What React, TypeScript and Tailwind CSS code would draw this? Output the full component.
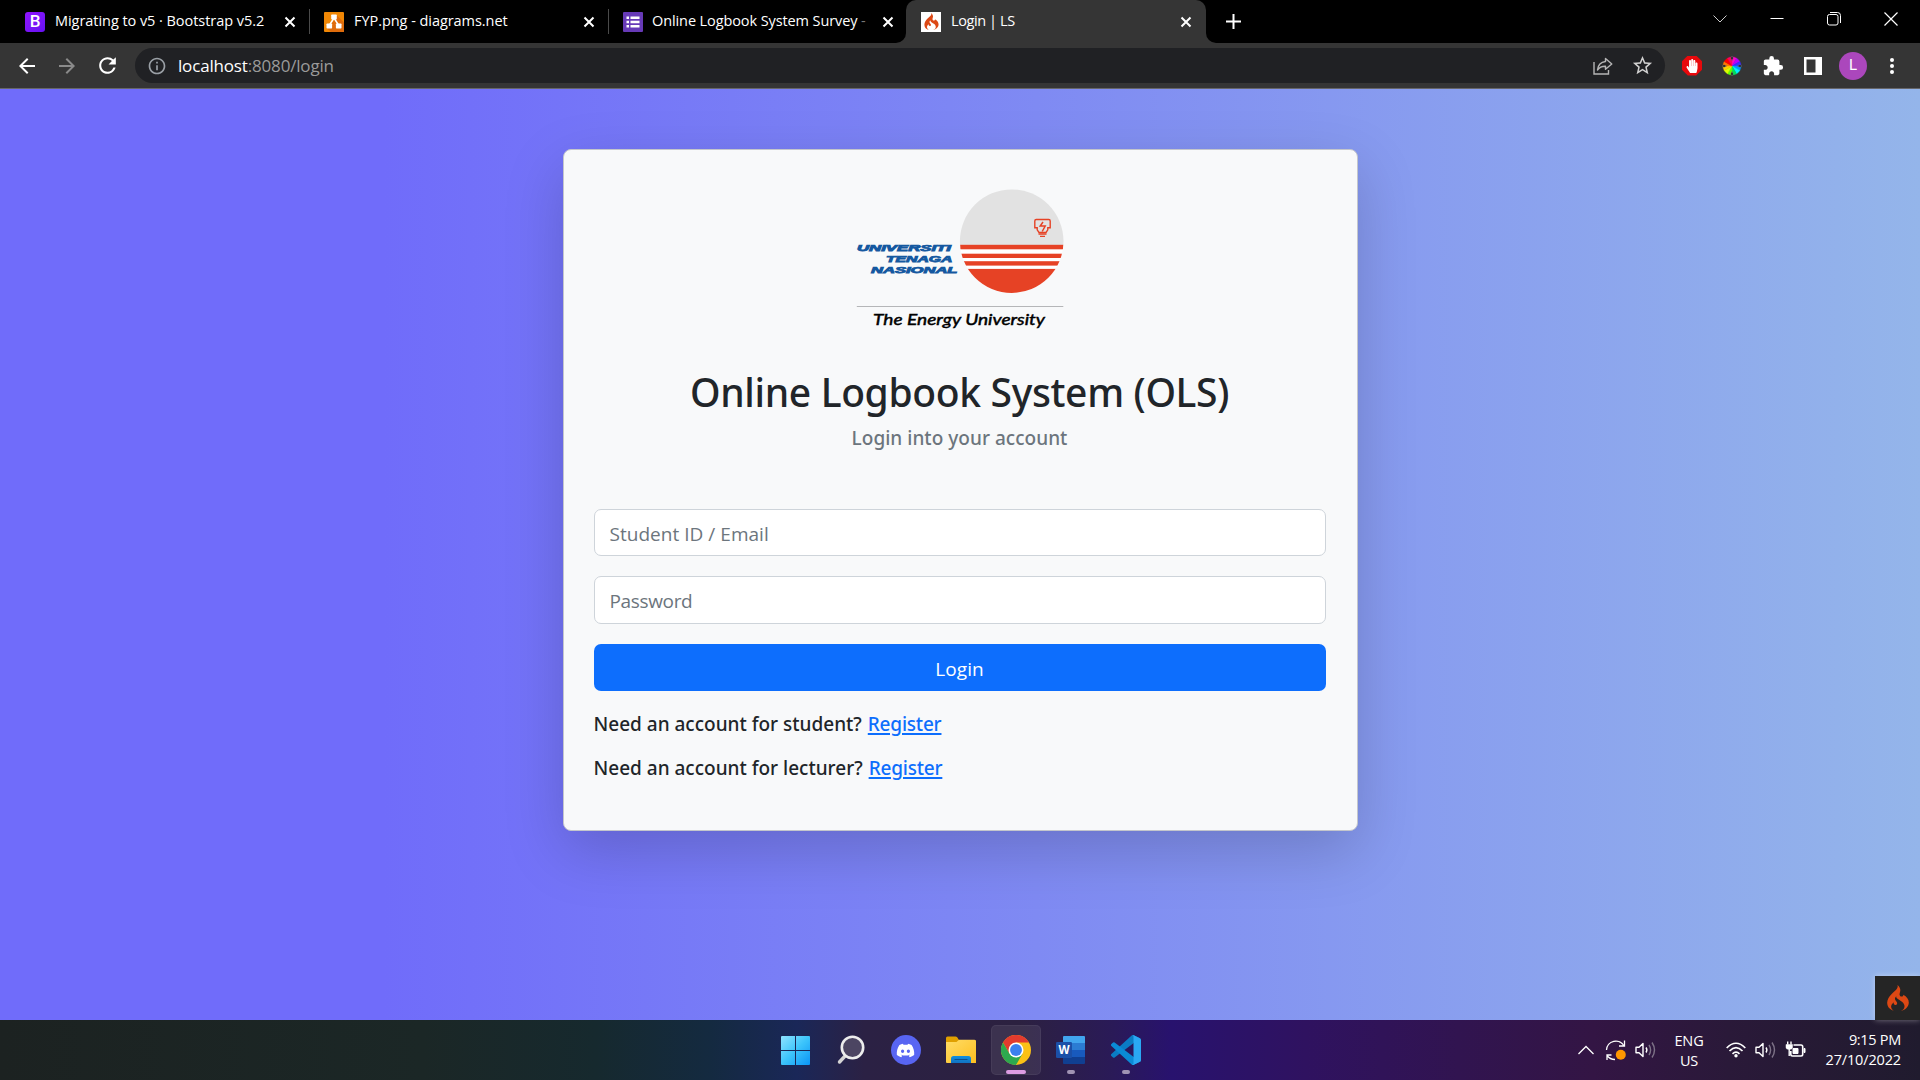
import React from "react";
import { SiCodeigniter } from "react-icons/si";
import { FaDiscord, FaHandPaper } from "react-icons/fa";
import { MdExtension, MdRefresh, MdStarBorder, MdArrowBack, MdArrowForward, MdInfoOutline } from "react-icons/md";

function CloseX() {
  return (
    <svg width="12" height="12" viewBox="0 0 12 12" fill="none" stroke="#fff" strokeWidth="2">
      <path d="M1.5 1.5l9 9M10.5 1.5l-9 9" />
    </svg>
  );
}

function BootstrapIcon() {
  return (
    <div className="flex h-5 w-5 items-center justify-center rounded-[3px] bg-linear-to-br from-[#9013fe] to-[#6610f2] font-['Roboto'] text-[17px] leading-none font-medium text-white">
      B
    </div>
  );
}

function DiagramIcon() {
  return (
    <svg width="20" height="20" viewBox="0 0 20 20">
      <rect width="20" height="20" rx="1" fill="#f08705" />
      <path d="M12.5 3L20 10.500V20H7L3 16.500l7-8z" fill="#df6c0c" />
      <path d="M10 6L5.500 13M10 6l4.500 7" stroke="#fff" strokeWidth="1.500" />
      <rect x="7.200" y="2.500" width="5.600" height="5" rx=".7" fill="#fff" />
      <rect x="2.500" y="11.500" width="5.600" height="5" rx=".7" fill="#fff" />
      <rect x="11.900" y="11.500" width="5.600" height="5" rx=".7" fill="#fff" />
    </svg>
  );
}

function FormsIcon() {
  return (
    <svg width="20" height="20" viewBox="0 0 20 20">
      <rect width="20" height="20" rx="1" fill="#673ab7" />
      <path d="M3.500 4.500h2.500v2.500H3.500zM3.500 8.700h2.500v2.500H3.500zM3.500 12.900h2.500v2.500H3.500zM7.500 4.500h9v2.500h-9zM7.500 8.700h9v2.500h-9zM7.500 12.900h9v2.500h-9z" fill="#fff" />
    </svg>
  );
}

function TabBar() {
  return (
    <div className="flex h-[43px] items-center bg-black text-[14.5px] text-white">
      <div className="flex h-full w-[309px] shrink-0 items-center pr-[13px] pl-[25px]">
        <BootstrapIcon />
        <span className="ml-[10px] grow pb-px tracking-[-0.05px] whitespace-nowrap">Migrating to v5 · Bootstrap v5.2</span>
        <CloseX />
      </div>
      <div className="h-[25px] w-px shrink-0 bg-[#4a4a4a]" />
      <div className="flex h-full w-[298px] shrink-0 items-center pr-[13px] pl-[14px]">
        <DiagramIcon />
        <span className="ml-[10px] grow pb-px tracking-[-0.05px] whitespace-nowrap">FYP.png - diagrams.net</span>
        <CloseX />
      </div>
      <div className="h-[25px] w-px shrink-0 bg-[#4a4a4a]" />
      <div className="flex h-full w-[287px] shrink-0 items-center pr-[2px] pl-[14px]">
        <FormsIcon />
        <span className="ml-[9px] grow pb-px tracking-[-0.1px] whitespace-nowrap">
          Online Logbook System Survey <span className="text-[#777]">-</span>
        </span>
        <CloseX />
      </div>
      <div className="flex h-full w-[10px] shrink-0 items-end bg-[#353535]">
        <div className="h-full w-[10px] rounded-br-[10px] bg-black" />
      </div>
      <div className="h-full w-[300px] shrink-0 bg-black">
        <div className="flex h-full items-center rounded-t-[10px] bg-[#353535] pr-[14px] pl-[15px]">
          <div className="flex h-5 w-5 items-center justify-center bg-white">
            <SiCodeigniter size={17} color="#dd4814" />
          </div>
          <span className="ml-[10px] grow pb-px tracking-[-0.4px] whitespace-nowrap">Login | LS</span>
          <CloseX />
        </div>
      </div>
      <div className="flex h-full w-[10px] shrink-0 bg-[#353535]">
        <div className="h-full w-[10px] rounded-bl-[10px] bg-black" />
      </div>
      <svg className="ml-[10px]" width="15" height="15" viewBox="0 0 15 15" stroke="#fff" strokeWidth="2">
        <path d="M7.500 0v15M0 7.500h15" />
      </svg>
      <div className="ml-auto flex h-full items-start gap-[43px] pt-[12px] pr-[22px]">
        <svg width="14" height="14" viewBox="0 0 14 14" fill="none" stroke="#ccc"><path d="M.5 3.500l6.500 6.500 6.500-6.500" /></svg>
        <svg width="14" height="14" viewBox="0 0 14 14" stroke="#fff"><path d="M.5 6.500h13" /></svg>
        <svg width="14" height="14" viewBox="0 0 14 14" fill="none" stroke="#fff">
          <rect x=".5" y="2.500" width="10.500" height="10.500" rx="2" />
          <path d="M3 .5h7.500a3 3 0 0 1 3 3V11" />
        </svg>
        <svg width="14" height="14" viewBox="0 0 14 14" stroke="#fff" strokeWidth="1.200"><path d="M.5.5l13 13M13.500.5l-13 13" /></svg>
      </div>
    </div>
  );
}

function ColorWheel() {
  const slices = ["#ff00c8", "#b400ff", "#3a2cff", "#0096ff", "#00f0ff", "#00e05a", "#5cff00", "#d8ff00", "#ffd000", "#ff7800", "#ff0000", "#ff0060"];
  return (
    <svg width="20" height="20" viewBox="-10 -10 20 20">
      {slices.map((c, i) => (
        <path key={c} d="M0 0L0-9A9 9 0 0 1 4.500-7.790Z" fill={c} stroke={c} strokeWidth=".4" transform={`rotate(${i * 30})`} />
      ))}
      {[0, 90, 180, 270].map((a) => (
        <path key={a} d="M0-5.500L-1.200-8 0-10 1.200-8Z" fill="#111" stroke="#777" strokeWidth=".5" transform={`rotate(${a})`} />
      ))}
    </svg>
  );
}

function Toolbar() {
  return (
    <div className="flex h-[46px] items-center border-b border-[#66666a] bg-[#353535] pr-[18px] pl-[15px]">
      <MdArrowBack size={24} color="#fff" />
      <MdArrowForward className="ml-[16px]" size={24} color="#8a8a8a" />
      <MdRefresh className="ml-[16px]" size={25} color="#fff" />
      <div className="ml-[15px] flex h-[35px] w-[1530px] items-center rounded-full bg-[#202124] pr-[11px] pl-[12px]">
        <MdInfoOutline size={20} color="#9aa0a6" />
        <span className="ml-[11px] text-[17px] tracking-[-0.17px] text-white">
          localhost<span className="text-[#9a9a9a]">:8080/login</span>
        </span>
        <svg className="ml-auto" width="20" height="18" viewBox="0 0 20 18" fill="none" stroke="#b5b5b5" strokeWidth="1.400">
          <path d="M1 5v12h14.500v-4" />
          <path d="M12.500 1.500L18.800 7l-6.300 5.300V9.300C9 9.200 6.500 10.200 4.500 13c.5-4.500 3.300-8 8-8.500z" strokeLinejoin="round" />
        </svg>
        <MdStarBorder className="ml-[18px]" size={23} color="#d0d0d0" />
      </div>
      <div className="ml-[17px] flex items-center">
        <div className="flex h-5 w-5 items-center justify-center bg-[#e8090c] [clip-path:polygon(29%_0,71%_0,100%_29%,100%_71%,71%_100%,29%_100%,0_71%,0_29%)]">
          <FaHandPaper className="scale-x-90" size={14} color="#fff" />
        </div>
        <div className="ml-[20px]"><ColorWheel /></div>
        <MdExtension className="ml-[20px]" size={22} color="#fff" />
        <svg className="ml-[20px]" width="18" height="18" viewBox="0 0 18 18">
          <path fillRule="evenodd" d="M0 0h18v18H0zM2.500 2.500v13h9v-13z" fill="#fff" />
        </svg>
        <div className="ml-[17px] flex h-[28px] w-[28px] items-center justify-center rounded-full bg-[#ab47bc] font-['Roboto'] text-[15px] text-white">L</div>
        <svg className="ml-[23px]" width="4" height="18" viewBox="0 0 4 18" fill="#fff">
          <circle cx="2" cy="3" r="2" /><circle cx="2" cy="9" r="2" /><circle cx="2" cy="15" r="2" />
        </svg>
      </div>
    </div>
  );
}

function UniversityLogo() {
  return (
    <svg className="mx-auto mt-[39px] block" width="208" height="141" viewBox="856 189 208 141">
      <defs>
        <clipPath id="sun"><circle cx="1011.700" cy="241.200" r="51.800" /></clipPath>
      </defs>
      <g clipPath="url(#sun)">
        <rect x="959" y="189" width="106" height="56" fill="#e2e2e2" />
        <rect x="959" y="245" width="106" height="50" fill="#fff" />
        <g fill="#e64225">
          <rect x="959" y="244.800" width="106" height="4.500" />
          <rect x="959" y="253.700" width="106" height="4.300" />
          <rect x="959" y="261.200" width="106" height="4.400" />
          <rect x="959" y="268.900" width="106" height="25" />
        </g>
      </g>
      <g fill="none" stroke="#e64225" strokeWidth="1.400">
        <path d="M1036.200 219.500h12.600q1.400 0 1.400 1.400v6.800h-2.400v2.200l-1.800 2.600h-7l-1.800-2.600v-2.200h-2.400v-6.800q0-1.400 1.400-1.400z" />
        <path d="M1038.500 234h8M1040 236.400h5" />
        <path d="M1043 222l-2.800 4h5l-3 5.500" strokeWidth="1.500" />
      </g>
      <g fill="#1458a0" stroke="#1458a0" strokeWidth=".75" fontFamily="'Liberation Sans', Arial, sans-serif" fontWeight="700" fontStyle="italic" fontSize="8.200">
        <text x="857" y="250.800" textLength="94" lengthAdjust="spacingAndGlyphs">UNIVERSITI</text>
        <text x="886" y="261.800" textLength="66.500" lengthAdjust="spacingAndGlyphs">TENAGA</text>
        <text x="871" y="272.800" textLength="86.500" lengthAdjust="spacingAndGlyphs">NASIONAL</text>
      </g>
      <rect x="856.800" y="306" width="206.500" height="1" fill="#b5b6b8" />
      <text x="873" y="324.800" textLength="172" lengthAdjust="spacingAndGlyphs" fill="#000" stroke="#000" strokeWidth=".45" fontFamily="Lato, sans-serif" fontStyle="italic" fontWeight="400" fontSize="15.500">The Energy University</text>
    </svg>
  );
}

function LoginCard() {
  return (
    <div className="mx-auto h-[682px] w-[795px] rounded-[8px] border border-[#c4c6cc] bg-[#f8f9fa] pr-[31px] pl-[30px] shadow-[0_20px_60px_rgba(0,0,0,0.175)]">
      <UniversityLogo />
      <h1 className="mt-[38px] h-[48px] text-center font-['Noto_Sans'] text-[39px] leading-[48px] font-medium tracking-[-0.34px] whitespace-nowrap text-[#212529]">
        Online Logbook System (OLS)
      </h1>
      <p className="mt-[10px] h-[24px] text-center font-['Noto_Sans'] text-[19px] leading-[24px] font-medium tracking-[0.03px] text-[#6c757d]">Login into your account</p>
      <div className="mt-[59px] flex h-[47px] items-center rounded-[7px] border border-[#ced4da] bg-white pt-[3px] pl-[15px] text-[19px] tracking-[0.03px] text-[#6c757d]">
        Student ID / Email
      </div>
      <div className="mt-[20px] flex h-[48px] items-center rounded-[7px] border border-[#ced4da] bg-white pt-[2px] pl-[15px] text-[19px] tracking-[-0.35px] text-[#6c757d]">
        Password
      </div>
      <button className="mt-[20px] flex h-[47px] w-full items-center justify-center rounded-[7px] bg-[#0d6efd] pt-[3px] text-[19px] tracking-[0.1px] text-white">Login</button>
      <p className="mt-[18px] h-[30px] font-['Noto_Sans'] text-[19px] leading-[30px] font-medium whitespace-nowrap text-[#212529]">
        Need an account for student? <a className="ml-px tracking-[-0.2px] text-[#0d6efd] underline decoration-2 underline-offset-2">Register</a>
      </p>
      <p className="mt-[14px] h-[30px] font-['Noto_Sans'] text-[19px] leading-[30px] font-medium whitespace-nowrap text-[#212529]">
        Need an account for lecturer? <a className="ml-px tracking-[-0.2px] text-[#0d6efd] underline decoration-2 underline-offset-2">Register</a>
      </p>
    </div>
  );
}

function Slot({ children, pill = "" }: { children: React.ReactNode; pill?: string }) {
  return (
    <div className="relative flex h-full w-[55px] items-center justify-center">
      {children}
      {pill && <div className={pill} />}
    </div>
  );
}

function Speaker() {
  return (
    <svg width="22" height="20" viewBox="0 0 22 20" fill="none" stroke="#fff" strokeWidth="1.400">
      <path d="M1 7.300h3L8 3.500v13l-4-3.800H1z" strokeLinejoin="round" />
      <path d="M11 7.500q1.800 2.500 0 5" />
      <path d="M14 5q3.200 5 0 10M17 2.500q5 7.500 0 15" stroke="#7d7287" />
    </svg>
  );
}

function Taskbar() {
  return (
    <div className="flex h-[60px] items-center bg-[linear-gradient(to_right,#1c2221_0%,#1b2726_22%,#16292e_31%,#142a40_37%,#1a2758_41.5%,#2b2144_45%,#2c2140_53%,#2a1a58_58%,#28126e_61%,#2f1260_68%,#311450_76%,#331544_83%,#2a1939_90%,#201b2e_100%)] pl-[768px] text-white">
      <Slot>
        <svg width="29" height="29" viewBox="0 0 29 29">
          <defs>
            <linearGradient id="win" x1="0" y1="0" x2="1" y2="1"><stop offset="0" stopColor="#8fe3ff" /><stop offset=".5" stopColor="#3cc4fb" /><stop offset="1" stopColor="#0a94f5" /></linearGradient>
          </defs>
          <path d="M1 0h13v14H0V1a1 1 0 0 1 1-1zM15 0h13a1 1 0 0 1 1 1v13H15zM0 15h14v14H1a1 1 0 0 1-1-1zM15 15h14v13a1 1 0 0 1-1 1H15z" fill="url(#win)" />
        </svg>
      </Slot>
      <Slot>
        <svg width="28" height="30" viewBox="0 0 28 30">
          <path d="M9.500 19.500L2.500 27" stroke="#d5d5d5" strokeWidth="3.400" strokeLinecap="round" />
          <circle cx="15.500" cy="12.500" r="10.700" fill="#4c4562" stroke="#ededed" strokeWidth="2.600" />
        </svg>
      </Slot>
      <Slot>
        <div className="flex h-[30px] w-[30px] items-center justify-center rounded-full bg-[#5865f2]"><FaDiscord size={19} color="#fff" /></div>
      </Slot>
      <Slot>
        <svg width="30" height="28" viewBox="0 0 30 28">
          <defs>
            <linearGradient id="folder" x1="0" y1="0" x2="1" y2="1"><stop offset="0" stopColor="#ffdc66" /><stop offset="1" stopColor="#fdbf1f" /></linearGradient>
            <linearGradient id="tray" x1="0" y1="0" x2="0" y2="1"><stop offset="0" stopColor="#0f8fe0" /><stop offset="1" stopColor="#1272c0" /></linearGradient>
          </defs>
          <path d="M0 2q0-1.500 1.500-1.500h8q1 0 1.700.8L13 4H28.500q1.500 0 1.500 1.500V12H0z" fill="#e0a000" />
          <path d="M0 6h10.500L13 3.800h15.500q1.500 0 1.500 1.500V27H1q-1 0-1-1z" fill="url(#folder)" />
          <path d="M5 27v-4.500q0-2.500 2.500-2.500h15q2.500 0 2.500 2.500V27z" fill="url(#tray)" />
          <path d="M8.500 23.500h13" stroke="#0c4f8e" strokeWidth="1" />
        </svg>
      </Slot>
      <div className="relative flex h-full w-[55px] items-center justify-center">
        <div className="flex h-[50px] w-[50px] items-center justify-center rounded-[5px] border border-white/5 bg-white/8">
          <svg width="30" height="30" viewBox="0 0 48 48">
            <circle cx="24" cy="24" r="24" fill="#fbc116" />
            <path d="M24 24L13.600 30 3.200 12A24 24 0 0 1 44.800 12H24z" fill="#e33b2e" />
            <path d="M3.200 12A24 24 0 0 0 24 48l10.400-18L24 24 13.600 30z" fill="#2da94f" />
            <circle cx="24" cy="24" r="12" fill="#fff" />
            <circle cx="24" cy="24" r="9.500" fill="#3b80ee" />
          </svg>
        </div>
        <div className="absolute bottom-[6px] left-[17.500px] h-[4px] w-[20px] rounded-full bg-[#dd9ce2]" />
      </div>
      <Slot pill="absolute bottom-[6px] left-[23.500px] h-[4px] w-[8px] rounded-full bg-[#a093b3]">
        <svg width="29" height="28" viewBox="0 0 29 28">
          <path d="M8 0h20a1 1 0 0 1 1 1v6H7V1a1 1 0 0 1 1-1z" fill="#41a5ee" />
          <path d="M7 7h22v7H7z" fill="#2b7cd3" />
          <path d="M7 14h22v7H7z" fill="#185abd" />
          <path d="M7 21h22v6a1 1 0 0 1-1 1H8a1 1 0 0 1-1-1z" fill="#103f91" />
          <rect y="6" width="16" height="16" rx="1.200" fill="#1b50a8" />
          <text x="8" y="18.300" textAnchor="middle" fill="#fff" fontFamily="Open Sans, sans-serif" fontWeight="700" fontSize="11.500">W</text>
        </svg>
      </Slot>
      <Slot pill="absolute bottom-[6px] left-[23.500px] h-[4px] w-[8px] rounded-full bg-[#a093b3]">
        <svg width="30" height="30" viewBox="0 0 100 100">
          <path d="M96.500 10.700L75.900.8a6.200 6.200 0 0 0-7.100 1.200L1.300 63.600a4.200 4.200 0 0 0 0 6.200l5.500 5a4.200 4.200 0 0 0 5.300.2L93.400 13.300c2.700-2 6.600-.1 6.600 3.300v-.2a6.300 6.300 0 0 0-3.500-5.700z" fill="#0a7cc4" />
          <path d="M96.500 89.300l-20.600 9.900a6.200 6.200 0 0 1-7.100-1.200L1.300 36.400a4.200 4.200 0 0 1 0-6.200l5.500-5a4.200 4.200 0 0 1 5.300-.2l81.300 61.700c2.700 2 6.600.1 6.600-3.300v.2a6.300 6.300 0 0 1-3.500 5.700z" fill="#0a8ad6" />
          <path d="M75.900 99.200a6.200 6.200 0 0 1-7.100-1.200c2.300 2.300 6.200.7 6.200-2.600V4.600c0-3.300-3.900-4.900-6.200-2.600a6.200 6.200 0 0 1 7.100-1.200l20.600 9.900a6.300 6.300 0 0 1 3.500 5.700v67.200a6.300 6.300 0 0 1-3.500 5.700z" fill="#2aa8f4" />
        </svg>
      </Slot>
      <div className="ml-auto flex h-full items-center pr-[19px] text-[14.5px]">
        <svg width="16" height="10" viewBox="0 0 16 10" fill="none" stroke="#fff" strokeWidth="1.300"><path d="M.5 9L8 1.500 15.500 9" /></svg>
        <svg className="ml-[11px]" width="22" height="22" viewBox="0 0 22 22" fill="none" stroke="#fff" strokeWidth="1.300">
          <path d="M1.500 11A9.300 9.300 0 0 1 19 7M19.500 1.500V7h-5.500M6.500 16H2v5M2 16.500q3 4 8 4" />
          <circle cx="15.800" cy="15.700" r="5" fill="#ff9800" stroke="none" />
        </svg>
        <div className="ml-[8px]"><Speaker /></div>
        <div className="ml-[17px] pt-[2px] text-center leading-[20px] tracking-[-0.15px]">
          <div>ENG</div>
          <div>US</div>
        </div>
        <svg className="ml-[22px]" width="20" height="16" viewBox="0 0 20 16" fill="none" stroke="#fff" strokeWidth="1.700">
          <path d="M.7 6q9.300-9.500 18.600 0M3.500 9q6.500-6.700 13 0M6.500 11.800q3.500-3.500 7 0" />
          <circle cx="10" cy="13.800" r="1.700" fill="#fff" stroke="none" />
        </svg>
        <div className="ml-[9px]"><Speaker /></div>
        <svg className="ml-[8px]" width="21" height="18" viewBox="0 0 21 18" fill="none" stroke="#fff" strokeWidth="1.600">
          <path d="M8.500 4H16q1.700 0 1.700 1.700v7.600q0 1.700-1.700 1.700H7.500q-1.700 0-1.700-1.700V10" />
          <path d="M1 3.500h6.500v2.800q0 2-2 2H3q-2 0-2-2z" fill="#fff" strokeWidth=".5" />
          <path d="M2.700.5v3M6 .5v3M4.200 8v7" strokeWidth="1.400" />
          <path d="M8 7.500h5v5H8zM19 7.500h1v4h-1z" fill="#fff" strokeWidth="1" />
        </svg>
        <div className="ml-[20px] text-right leading-[20px] tracking-[-0.15px]">
          <div className="tracking-[-0.3px]">9:15 PM</div>
          <div>27/10/2022</div>
        </div>
      </div>
    </div>
  );
}

export default function App() {
  return (
    <div className="flex h-[1080px] w-[1920px] flex-col overflow-hidden font-['Open_Sans',sans-serif]">
      <TabBar />
      <Toolbar />
      <main className="relative grow bg-[linear-gradient(to_right,#706cfa_0%,#706cfa_20%,#7f8af3_54%,#94b5ea_100%)] pt-[60px]">
        <LoginCard />
        <div className="absolute right-0 bottom-0 flex h-[44px] w-[45px] items-center justify-center bg-[#252525] shadow-[0_0_6px_rgba(255,255,255,0.4)]">
          <SiCodeigniter size={26} color="#dd4814" />
        </div>
      </main>
      <Taskbar />
    </div>
  );
}
